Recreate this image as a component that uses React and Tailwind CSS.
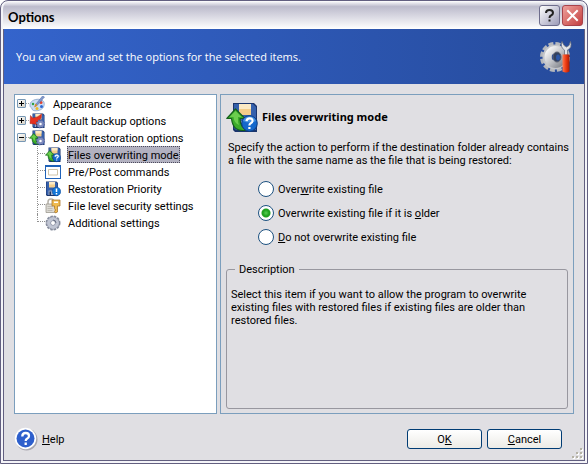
import React, { useState } from "react";

function Floppy() {
  return (
    <g>
      <path d="M7 1h21l3 3v26H9l-2-2z" fill="#1b356c" />
      <path d="M8 2h19l3 3v23H10l-2-2z" fill="#3560ac" />
      <path d="M13 2h12v11H13z" fill="#f3cd8a" />
      <path d="M13 2h12v5H13z" fill="#fbe9c4" />
      <path d="M12 19h12v9H12z" fill="#9eabc4" />
      <path d="M14 21h3v7h-3z" fill="#1f3566" />
    </g>
  );
}

function GreenArrow() {
  return (
    <g strokeLinejoin="round">
      <path
        d="M9.500 7 L19 16.500 H14 Q14 25 21 28 Q7 31 5.500 16.500 H0.800 Z"
        fill="#3cab2a"
        stroke="#14601a"
        strokeWidth="1.200"
      />
      <path d="M9.500 9 L15.500 15 H12 Q11.500 20 13 23 Q8 21 7.500 15 H3.500 Z" fill="#7fdc5c" opacity=".7" />
    </g>
  );
}

function GearBadge() {
  return (
    <g>
      <circle cx="23" cy="22" r="7" fill="none" stroke="#5c6aa6" strokeWidth="4" strokeDasharray="3 2.500" />
      <circle cx="23" cy="22" r="4.500" fill="#fff" stroke="#7f8bbd" strokeWidth="4" />
    </g>
  );
}

function Icon({ name, className }) {
  return (
    <svg viewBox="0 0 32 32" className={className} aria-hidden="true">
      {name === "appearance" && (
        <g>
          <path d="M2 17C3 9 14 5 23 7c8 2 9 9 6 15-3 6-13 9-20 7-4-1-2-5-5-6-2-1-2-3-2-6z" fill="#c9dbf2" stroke="#7f9cc6" strokeWidth="1.500" />
          <circle cx="8" cy="16" r="2.500" fill="#31a145" />
          <circle cx="24" cy="13" r="3" fill="#e04431" />
          <circle cx="25" cy="21" r="3" fill="#2e68d2" />
          <circle cx="16" cy="25" r="3" fill="#efba26" />
          <path d="M27 0l4 2-15 17-4 2 2-5z" fill="#8298cc" stroke="#4d67a0" />
          <path d="M13 15l4 4-7 4z" fill="#dd8c28" />
        </g>
      )}
      {name === "backup" && (
        <g>
          <Floppy />
          <path d="M3 5l4 5Q17 10 25 2q0 14-11 16l4 5L2 21z" fill="#e5301f" stroke="#a81c12" />
          <GearBadge />
        </g>
      )}
      {name === "restore" && (
        <g>
          <Floppy />
          <GreenArrow />
          <GearBadge />
        </g>
      )}
      {name === "overwrite" && (
        <g>
          <Floppy />
          <GreenArrow />
          <circle cx="23.500" cy="21.500" r="7.800" fill="#1468cc" stroke="#0d3d84" />
          <path d="M17 19Q18 14.500 23.500 14.500T30 19Q23 22 17 19z" fill="#63aef0" opacity=".6" />
          <path d="M20.500 19.200q.3-3 3.300-2.900 3 .2 2.700 2.900-.2 1.300-2 2.200-1.100.6-1.100 2M23.400 25v2" fill="none" stroke="#fff" strokeWidth="2.200" />
        </g>
      )}
      {name === "commands" && (
        <g>
          <path d="M0 2h32v28H0z" fill="#1f62b8" />
          <path d="M2 6h28v22H2z" fill="#fff" />
          <path d="M7 11h18v11H7z" fill="#fff" stroke="#cfc4aa" strokeWidth="2" />
        </g>
      )}
      {name === "priority" && (
        <g>
          <g transform="translate(-5 0)">
            <Floppy />
          </g>
          <circle cx="23" cy="21" r="8.500" fill="#1477d8" stroke="#0c4593" />
          <path d="M23 15v7M23 24v3" stroke="#fff" strokeWidth="3" />
        </g>
      )}
      {name === "security" && (
        <g>
          <path d="M6 14V8q0-6 6-6t6 6v6" fill="none" stroke="#b4b0a8" strokeWidth="3" />
          <path d="M2 12h19v17H2z" fill="#dcdad4" stroke="#98948a" strokeWidth="1.500" />
          <path d="M5 17h10M5 21h10M5 25h10" stroke="#b4b0a8" strokeWidth="1.500" />
          <path d="M14 4h16v12h-5v12l-4 2-2-3 2-3-2-3V16h-5z" fill="#f0bb50" stroke="#a8742a" strokeWidth="1.500" />
          <path d="M18 7h8v3h-8z" fill="#fff" />
        </g>
      )}
      {name === "gear" && (
        <g>
          <circle cx="16" cy="16" r="13" fill="none" stroke="#8a90a0" strokeWidth="4" strokeDasharray="4.800 2.020" />
          <circle cx="16" cy="16" r="8.500" fill="#fff" stroke="#7c8294" strokeWidth="9" />
          <circle cx="16" cy="16" r="8.500" fill="none" stroke="#c0c5d3" strokeWidth="7" />
          <path d="M16 10a6 6 0 0 1 6 6" fill="none" stroke="#6c7386" strokeWidth="2" />
        </g>
      )}
    </svg>
  );
}

function BannerIcon() {
  return (
    <svg viewBox="0 0 32 32" className="size-8 shrink-0" aria-hidden="true">
      <defs>
        <linearGradient id="steel" x1="0" y1="0" x2="1" y2="1">
          <stop offset="0" stopColor="#f6f6f6" />
          <stop offset=".5" stopColor="#c2c4c8" />
          <stop offset="1" stopColor="#85888f" />
        </linearGradient>
        <linearGradient id="grip" x1="0" x2="1">
          <stop offset="0" stopColor="#ff7a4e" />
          <stop offset=".5" stopColor="#ee3a12" />
          <stop offset="1" stopColor="#a81c04" />
        </linearGradient>
      </defs>
      <circle cx="15" cy="16" r="13" fill="none" stroke="#b4b7bc" strokeWidth="4" strokeDasharray="4.800 2.007" />
      <circle cx="15" cy="16" r="8" fill="none" stroke="#c4c6ca" strokeWidth="9" />
      <circle cx="15.500" cy="16" r="7.500" fill="none" stroke="url(#steel)" strokeWidth="7" />
      <ellipse cx="17" cy="16" rx="4" ry="5" fill="#33415f" stroke="#5b6070" />
      <ellipse cx="18" cy="16.500" rx="2" ry="3" fill="#2b56a8" />
      <path d="M22 0.500q-2 6 2.500 8.500V14h3V9Q32.500 6.500 30.500 0.500l-1.500 4-2.500 1.500L24 4.500z" fill="#e3e5ea" stroke="#6c7280" strokeWidth=".8" />
      <path d="M22.500 13.500h7v17q-3.500 2-7 0z" fill="url(#grip)" />
    </svg>
  );
}

const groups = [
  { label: "Appearance", icon: "appearance" },
  { label: "Default backup options", icon: "backup" },
  {
    label: "Default restoration options",
    icon: "restore",
    children: [
      { label: "Files overwriting mode", icon: "overwrite" },
      { label: "Pre/Post commands", icon: "commands" },
      { label: "Restoration Priority", icon: "priority" },
      { label: "File level security settings", icon: "security" },
      { label: "Additional settings", icon: "gear" },
    ],
  },
];

function Tree() {
  return (
    <ul role="tree" aria-label="Options" className="w-[203px] shrink-0 border border-[#7b9ebd] bg-white">
      {groups.map((group) => (
        <li key={group.label} role="treeitem" aria-expanded={!!group.children}>
          <div className="flex h-[17px] items-center pl-0.5">
            <button
              type="button"
              aria-label={(group.children ? "Collapse " : "Expand ") + group.label}
              className="flex size-[9px] items-center justify-center rounded-[1px] border border-[#7898b5] bg-linear-to-br from-white to-[#d4d0c4]"
            >
              <svg viewBox="0 0 5 5" className="size-[5px] shrink-0" aria-hidden="true">
                <path d={group.children ? "M0 2h5v1H0z" : "M0 2h5v1H0zM2 0h1v5H2z"} />
              </svg>
            </button>
            <span className="w-[3px] border-t border-dotted border-[#a0a0a0]" />
            <Icon name={group.icon} className="size-4 shrink-0" />
            <span className="pt-0.5 pl-2">{group.label}</span>
          </div>
          {group.children && (
            <ul role="group">
              {group.children.map((item, i) => (
                <li
                  key={item.label}
                  role="treeitem"
                  aria-selected={i === 0}
                  className="group flex h-[17px] items-center pl-[22px]"
                >
                  <span className="h-full w-2 border-l border-dotted border-[#909090] group-last:h-2 group-last:self-start">
                    <span className="block h-2 border-b border-dotted border-[#909090]" />
                  </span>
                  <Icon name={item.icon} className="size-4 shrink-0" />
                  <span
                    className={
                      i === 0
                        ? "ml-1.5 flex h-[17px] items-center border border-dotted border-[#4c4a5c] bg-[#b2b1c0] pt-0.5"
                        : "pt-0.5 pl-[7px]"
                    }
                  >
                    {item.label}
                  </span>
                </li>
              ))}
            </ul>
          )}
        </li>
      ))}
    </ul>
  );
}

const modes = [
  { id: "always", label: <>Over<u>w</u>rite existing file</> },
  { id: "older", label: <>Overwrite existing file if it is <u>o</u>lder</> },
  { id: "never", label: <><u>D</u>o not overwrite existing file</> },
];

const pushButton =
  "h-5 w-[75px] rounded-[3px] border border-[#003c74] bg-linear-to-b from-white to-[#ecebe6] pt-px leading-4";

export default function App() {
  const [mode, setMode] = useState("older");

  return (
    <main className="flex min-h-screen flex-col rounded-t-lg border border-[#625f80] bg-[#f4f4f8] px-0.5 pb-0.5 font-[Roboto,sans-serif] text-[11px] leading-[13px] text-black">
      <header className="flex h-7 items-center gap-0.5 rounded-t-lg bg-linear-to-b from-white via-[#bcbbcc] via-20% to-white pr-0.5 pl-[5px]">
        <h1 className="flex-1 pt-1 font-[Lato,sans-serif] text-[13px] leading-4 font-bold">Options</h1>
        <button type="button" aria-label="Help" className="flex size-[21px] items-center justify-center rounded-[3px] border border-[#6e6d8c] bg-linear-to-br from-white to-[#9d9cb8]">
          <svg viewBox="0 0 15 15" className="size-[15px]" fill="none" stroke="#222" strokeWidth="2" aria-hidden="true">
            <path d="M4 5Q4 2 7.500 2T11 5Q11 6.500 9 7.500 7.500 8.200 7.500 10M7.500 11.500v2" />
          </svg>
        </button>
        <button type="button" aria-label="Close" className="flex size-[21px] items-center justify-center rounded-[3px] border border-[#a8434b] bg-linear-to-br from-[#eda09c] to-[#c33c40]">
          <svg viewBox="0 0 15 15" className="size-[15px]" stroke="#fff" strokeWidth="2" strokeLinecap="square" aria-hidden="true">
            <path d="M3 3l9 9M12 3l-9 9" />
          </svg>
        </button>
      </header>

      <div className="flex flex-1 flex-col border border-t-0 border-[#625f80] bg-[#e0dfe3]">
        <div className="flex h-[55px] items-center justify-between bg-linear-to-r from-[#3464cc] to-[#264b9c] pr-3 pl-3 text-white">
          <p className="font-['Open_Sans',sans-serif]">You can view and set the options for the selected items.</p>
          <BannerIcon />
        </div>

        <div className="flex flex-1 gap-[3px] px-2.5 pt-2.5">
          <Tree />

          <section className="flex flex-1 flex-col border border-[#7b9ebd] pb-1 pt-[7px] pl-[5px]">
            <div className="flex items-center gap-1">
              <Icon name="overwrite" className="size-8 shrink-0" />
              <h2 className="pb-1 font-['Noto_Sans',sans-serif] font-bold">Files overwriting mode</h2>
            </div>
            <p className="mt-[7px] pl-0.5">
              Specify the action to perform if the destination folder already contains
              a file with the same name as the file that is being restored:
            </p>
            <div role="radiogroup" aria-label="Files overwriting mode" className="mt-2.5 flex flex-col pl-8">
              {modes.map((m) => (
                <label key={m.id} className="flex h-6 items-center gap-1">
                  <input
                    type="radio"
                    name="mode"
                    checked={mode === m.id}
                    onChange={() => setMode(m.id)}
                    className="size-4 appearance-none rounded-full border border-[#1c5180] bg-white checked:bg-[radial-gradient(circle,#56d052_0,#21a121_3px,#21a121_4px,#fff_5px)]"
                  />
                  <span>{m.label}</span>
                </label>
              ))}
            </div>
            <fieldset className="mt-3.5 mr-[5px] flex-1 rounded-[3px] border border-[#98979f] px-1">
              <legend className="ml-1 px-1">Description</legend>
              <p className="mt-3">
                Select this item if you want to allow the program to overwrite
                existing files with restored files if existing files are older than
                restored files.
              </p>
            </fieldset>
          </section>
        </div>

        <footer className="flex h-[46px] items-center justify-between pl-2.5">
          <a href="#help" className="flex items-center gap-1 pt-1">
            <svg viewBox="0 0 24 24" className="size-6" aria-hidden="true">
              <circle cx="12.500" cy="12.500" r="11" fill="#a9a8b0" />
              <circle cx="11.500" cy="11.500" r="10.700" fill="#fff" />
              <circle cx="11.500" cy="11.500" r="9" fill="#2e5fcc" />
              <path d="M8.300 9.500q0-3.500 3.400-3.500 3.300 0 3.300 3 0 1.700-2 2.700-1.300.7-1.300 2.300M11.700 15.500v2.500" fill="none" stroke="#fff" strokeWidth="2.300" />
            </svg>
            <span><u>H</u>elp</span>
          </a>
          <div className="flex h-full items-center">
            <div className="flex gap-[5px] pt-1">
              <button type="button" className={pushButton}>O<u>K</u></button>
              <button type="button" className={pushButton}><u>C</u>ancel</button>
            </div>
            <svg viewBox="0 0 12 12" className="ml-2.5 size-3 self-end" aria-hidden="true">
              <path d="M9 1h2v2H9zM5 5h2v2H5zM9 5h2v2H9zM1 9h2v2H1zM5 9h2v2H5zM9 9h2v2H9z" fill="#fff" />
              <path d="M8 0h2v2H8zM4 4h2v2H4zM8 4h2v2H8zM0 8h2v2H0zM4 8h2v2H4zM8 8h2v2H8z" fill="#b5b2a5" />
            </svg>
          </div>
        </footer>
      </div>
    </main>
  );
}
